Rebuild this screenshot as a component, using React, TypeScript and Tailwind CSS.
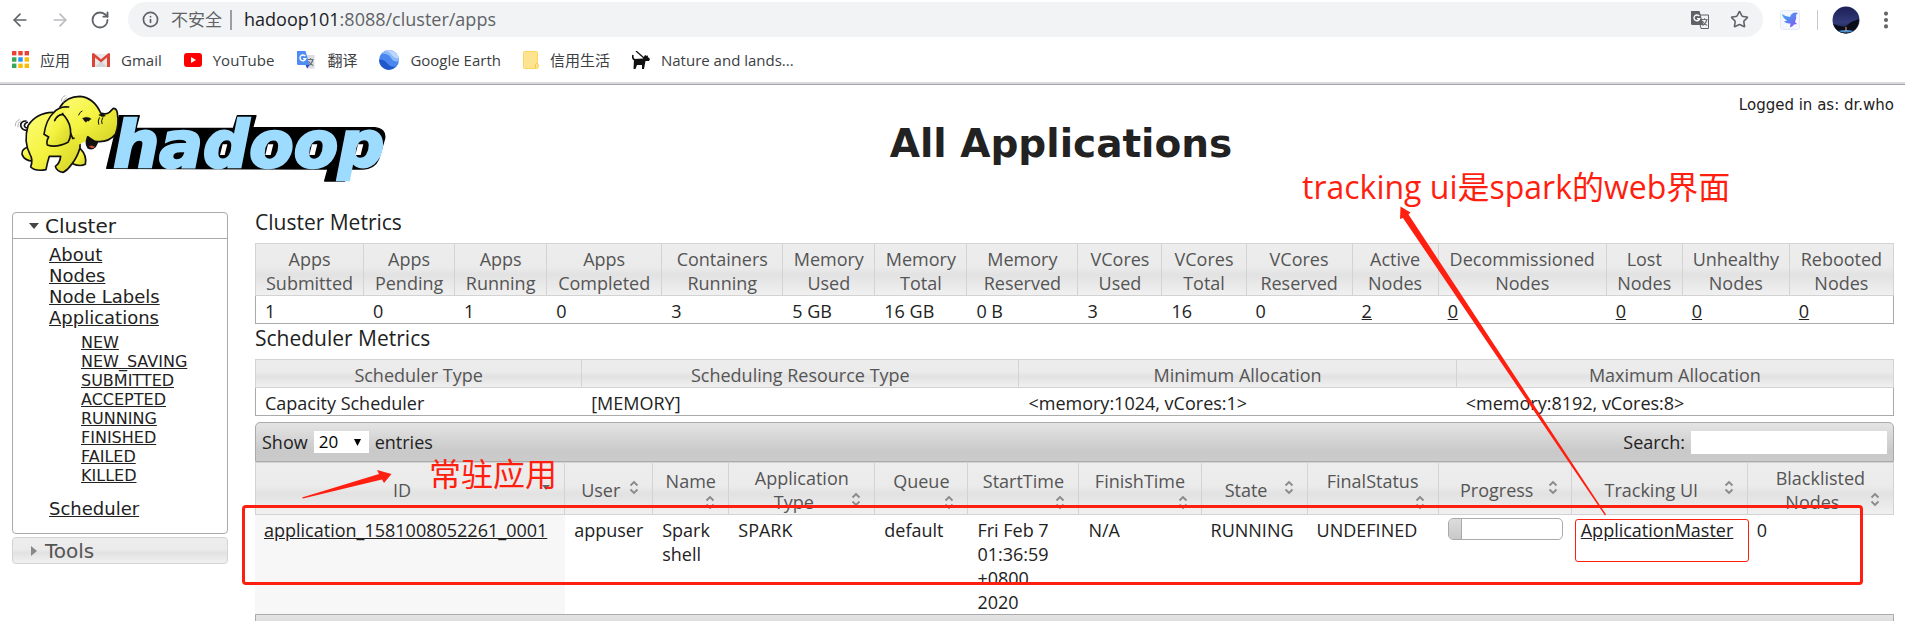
import type { ReactNode } from "react";
import { ArrowLeft, ArrowRight, RotateCw, Info, Star, EllipsisVertical } from "lucide-react";

const ui = "font-['Open_Sans','Noto_Sans_CJK_SC',sans-serif]";
const headBg = "bg-[linear-gradient(#ededed,#ebebeb_45%,#e2e2e2_60%,#f1f1f1)]";

function HadoopLogo() {
  return (
    <svg viewBox="0 0 1200 330" className="h-[110px] w-[400px] shrink-0" role="img" aria-label="hadoop">
      <defs>
        <linearGradient id="skin" x1="0" y1="0" x2="1" y2="1">
          <stop offset="0" stopColor="#fdfc7a" />
          <stop offset="0.5" stopColor="#f4f33f" />
          <stop offset="1" stopColor="#d2d024" />
        </linearGradient>
      </defs>
      <path
        d="M358 92 L418 92 L408 130 L700 130 L712 92 L768 92 L758 128 L1124 128 Q1158 132 1154 160 L1136 222 Q1124 250 1090 252 L1044 252 L1034 288 L974 288 L984 252 L320 250 Z"
        fill="#000"
        stroke="#000"
        strokeWidth="4"
        strokeLinejoin="round"
      />
      <text
        x="340"
        y="245"
        fill="#9edcff"
        stroke="#9edcff"
        strokeWidth="8"
        fontFamily="'DejaVu Sans', sans-serif"
        fontWeight="700"
        fontStyle="italic"
        fontSize="194"
      >
        hadoop
      </text>
      <g fill="#fff">
        <path d="M668 178 L682 178 L674 210 L660 210 Z" />
        <path d="M804 178 L820 178 L812 210 L796 210 Z" />
        <path d="M936 178 L952 178 L944 210 L928 210 Z" />
        <path d="M1074 178 L1090 178 L1082 210 L1066 210 Z" />
      </g>
      <g fill="url(#skin)" stroke="#111" strokeWidth="5" strokeLinejoin="round" strokeLinecap="round">
        <path d="M84 136 Q66 138 62 122 Q62 108 78 108 M84 128 Q74 130 73 121 Q74 115 82 112" fill="none" />
        <path d="M88 186 Q64 190 66 208 Q74 228 98 228 L112 200 Z" />
        <path d="M240 190 Q262 212 256 238 Q240 246 218 236 L222 206 Z" />
        <path d="M158 82 Q108 84 84 122 Q70 170 90 208 Q100 224 92 246 Q106 260 138 254 Q142 232 148 214 Q166 214 182 214 Q180 234 166 244 Q170 260 190 262 Q204 254 216 236 Q232 216 240 188 L240 120 Z" />
        <path d="M180 66 Q200 34 240 34 Q282 38 302 84 Q318 90 328 82 L340 70 Q350 70 352 84 Q358 120 346 148 Q322 176 282 168 L264 156 L218 160 Z" />
        <path d="M222 150 L262 146 L258 168 L228 184 Z" stroke="none" fill="#e9e733" />
        <path d="M264 156 Q254 172 264 188 Q282 198 292 172 Q276 170 264 156 Z" fill="#111" />
        <path d="M266 184 Q276 178 286 186 Q276 194 266 184 Z" fill="#e5533c" strokeWidth="1" />
        <path d="M206 66 Q178 62 160 84 Q138 104 132 148 L146 156 Q138 170 142 180 Q168 190 204 172 Q218 150 208 118 Q196 90 186 88 Q172 90 164 106" />
        <path d="M186 88 Q170 92 164 108 M236 90 Q240 80 246 78 M296 118 Q292 108 298 98 M306 116 Q302 108 308 98" fill="none" strokeWidth="3" />
        <path d="M248 100 Q262 92 274 102 Q262 104 258 112 Q252 108 248 100 Z M262 106 Q264 112 270 104 Z" fill="#111" strokeWidth="1" />
        <path d="M298 90 Q306 82 316 92 Q306 98 298 90 Z" fill="#111" strokeWidth="2" />
        <path d="M184 48 Q184 36 196 32 M190 52 Q190 42 200 38 M46 122 Q46 108 58 104 M54 126 Q52 114 62 108" fill="none" stroke="#888" strokeWidth="2" />
      </g>
    </svg>
  );
}

function TranslateIcon({ color }: { color?: boolean }) {
  const back = color ? "#4f8df5" : "#5f6368";
  return (
    <svg viewBox="0 0 20 20" className="size-5 shrink-0" aria-hidden="true">
      <path d="M8 5h10.500v13.500H11z" fill={color ? "#d9dce0" : "#f1f3f4"} stroke={color ? "none" : "#5f6368"} />
      <path d="M11.500 9.500h6M14.500 8.200v1.300M17 9.500c-.8 3-2.600 5-4.600 6M12.400 11c1 2 2.600 3.600 4.800 4.400" stroke="#6b7075" fill="none" strokeWidth="1.100" />
      <path d="M1 1h8.500l4 14H2.200Q1 15 1 13.800z" fill={back} />
      {color && <path d="M9.500 15h4l-2.300 3.500z" fill="#1f4fb5" />}
      <path d="M9.300 6.200A2.900 2.900 0 1 0 9.700 8.600H7" stroke="#fff" fill="none" strokeWidth="1.400" />
    </svg>
  );
}

function AppsIcon() {
  const colors = ["#ea4335", "#ea4335", "#ea4335", "#34a853", "#2196f3", "#fbbc05", "#34a853", "#fbbc05", "#fbbc05"];
  return (
    <svg viewBox="0 0 17 17" className="h-[17px] w-[17px]" aria-hidden="true">
      {colors.map((c, i) => (
        <rect key={i} x={(i % 3) * 6.300} y={Math.floor(i / 3) * 6.300} width="4.400" height="4.400" fill={c} />
      ))}
    </svg>
  );
}

function GmailIcon() {
  return (
    <svg viewBox="0 0 18 14" className="h-[14px] w-[18px]" aria-hidden="true">
      <path d="M0 1h18v13H0z" fill="#e8e8e8" />
      <path d="M3 14l6-6 6 6z" fill="#d5d5d5" />
      <path d="M0 14V1.200Q0 0 1.500 0L9 6.200 16.500 0Q18 0 18 1.200V14h-3V4.500L9 9.600 3 4.500V14z" fill="#db4437" />
    </svg>
  );
}

function YouTubeIcon() {
  return (
    <svg viewBox="0 0 18 14" className="h-[14px] w-[18px]" aria-hidden="true">
      <rect width="18" height="14" rx="3" fill="#f00" />
      <path d="M7 4l5 3-5 3z" fill="#fff" />
    </svg>
  );
}

function EarthIcon() {
  return (
    <svg viewBox="0 0 20 20" className="size-5" aria-hidden="true">
      <circle cx="10" cy="10" r="10" fill="#4a86f0" />
      <path d="M2 4Q8-2 15 1.500 20 5 20 11 15 13 12 8 9 3 2 4z" fill="#8ab8fb" />
      <path d="M5 1.500Q9 0 12 4 15 9 20 8 18 1 10 0 7 0 5 1.500z" fill="#bcd7fd" />
      <path d="M0 10Q4 8 8 13 12 18 17 16.500 13 20.500 8 19.700 1 18 0 10z" fill="#2158c9" />
    </svg>
  );
}

function NoteIcon() {
  return (
    <svg viewBox="0 0 16 18" className="h-[18px] w-4" aria-hidden="true">
      <path d="M1.500.5h12q1 0 1 1v11q1 .5 1 2.500 0 2.500-2 2.500H1.500q-1 0-1-1v-15q0-1 1-1z" fill="#fee391" stroke="#fbd65a" />
      <path d="M12.500 17V13.500q0-1 1.800-1" fill="none" stroke="#f5c93e" />
    </svg>
  );
}

function DogIcon() {
  return (
    <svg viewBox="0 0 18 18" className="size-[18px]" aria-hidden="true">
      <path d="M4 0l8 7" stroke="#111" strokeWidth="1.300" />
      <path d="M1 4q-1 4 2 5" stroke="#111" strokeWidth="1.600" fill="none" />
      <path d="M2 8l9-.5L13 4l2 1 .5-1 .5 2 2 2-1 2h-3.500L12 18h-2v-4H5l-1.500 4h-2z" fill="#111" />
    </svg>
  );
}

function Bookmark({ icon, label }: { icon: ReactNode; label: string }) {
  return (
    <a href="#" className="flex items-center gap-[11px] text-[15px] leading-5 text-[#3c4043]">
      {icon}
      {label}
    </a>
  );
}

function BrowserChrome() {
  return (
    <header className={`${ui} shrink-0 border-b border-[#a5a5a5] bg-white`}>
      <div className="flex items-center pt-[2px] pr-2 pl-[10px]">
        <div className="flex w-[118px] items-center gap-5 text-[#5f6368]">
          <button aria-label="Back"><ArrowLeft size={20} strokeWidth={2} /></button>
          <button aria-label="Forward"><ArrowRight size={20} strokeWidth={2} className="text-[#b9bbbe]" /></button>
          <button aria-label="Reload"><RotateCw size={20} strokeWidth={2.2} /></button>
        </div>
        <div className="flex h-[35px] flex-1 items-center rounded-full bg-[#f1f3f4] pr-[14px] pl-[14px] text-[17px] text-[#5f6368]">
          <Info size={17} strokeWidth={2.4} />
          <span className="ml-3">不安全</span>
          <span className="mx-2 h-5 w-[2px] bg-[#9a9da1]" />
          <span className="ml-1 flex-1 text-[18px]">
            <span className="text-[#202124]">hadoop101</span>:8088/cluster/apps
          </span>
          <span className="flex items-center gap-5">
            <button aria-label="Translate"><TranslateIcon /></button>
            <button aria-label="Bookmark"><Star size={19} strokeWidth={2} /></button>
          </span>
        </div>
        <div className="ml-[17px] flex items-center">
          <svg viewBox="0 0 20 20" className="size-5" aria-hidden="true">
            <defs>
              <linearGradient id="bird" x1="0" y1="0" x2="1" y2="1">
                <stop offset="0" stopColor="#36b4f5" />
                <stop offset="1" stopColor="#8a4cf0" />
              </linearGradient>
            </defs>
            <rect x=".5" y=".5" width="19" height="19" rx="2" fill="#f5f7ff" stroke="#e6eaf6" />
            <path d="M2 4q4 3 8 3 1-4 5-4.500L18 3l-2 2q1 3-1 7l2 2-3 .5q-1 2-4 3l.5-4Q6 14 4 11q2 0 3-.5Q3 8 2 4z" fill="url(#bird)" />
          </svg>
          <span className="ml-[17px] h-5 w-px bg-[#c6c8cb]" />
          <svg viewBox="0 0 28 28" className="ml-[14px] size-[28px]" aria-hidden="true">
            <defs>
              <linearGradient id="sky" x1="0" y1="0" x2="0" y2="1">
                <stop offset="0" stopColor="#1b1f55" />
                <stop offset="0.600" stopColor="#343b7a" />
                <stop offset="1" stopColor="#0b1020" />
              </linearGradient>
            </defs>
            <circle cx="14" cy="14" r="13.500" fill="url(#sky)" />
            <path d="M1 18q5 2 12 3l6-5 8-3q0 12-13 14.500Q4 27 1 18z" fill="#0a0d18" />
            <path d="M6 25q8-2 16 0-8 3-16 0z" fill="#4a8fd0" />
            <path d="M14 21v4" stroke="#f3a27a" />
          </svg>
          <button aria-label="Menu" className="ml-[15px] text-[#5f6368]"><EllipsisVertical size={22} strokeWidth={2.5} /></button>
        </div>
      </div>
      <nav className="flex h-[47px] items-center gap-[22px] border-b-2 border-[#dadbe0] pl-3">
        <Bookmark icon={<AppsIcon />} label="应用" />
        <Bookmark icon={<GmailIcon />} label="Gmail" />
        <Bookmark icon={<YouTubeIcon />} label="YouTube" />
        <Bookmark icon={<TranslateIcon color />} label="翻译" />
        <Bookmark icon={<EarthIcon />} label="Google Earth" />
        <Bookmark icon={<NoteIcon />} label="信用生活" />
        <Bookmark icon={<DogIcon />} label="Nature and lands..." />
      </nav>
    </header>
  );
}

const states = ["NEW", "NEW_SAVING", "SUBMITTED", "ACCEPTED", "RUNNING", "FINISHED", "FAILED", "KILLED"];

function Sidebar() {
  return (
    <aside className="mt-1 ml-3 w-[216px] shrink-0">
      <section className="rounded-[4px] border border-[#aaa]">
        <h3 className="flex h-[26px] items-center border-b border-[#aaa] pl-4 text-[20px] leading-[26px]">
          <svg viewBox="0 0 10 6" className="mr-[6px] h-[6px] w-[10px]" aria-hidden="true"><path d="M0 0h10L5 6z" fill="#454545" /></svg>
          Cluster
        </h3>
        <ul className="pt-[5px] pb-[14px] pl-9 text-[18px] leading-[21px]">
          {["About", "Nodes", "Node Labels", "Applications"].map((t) => (
            <li key={t}><a href="#" className="underline">{t}</a></li>
          ))}
          <li>
            <ul className="pt-[5px] pb-[13px] pl-8 text-[16px] leading-[19px]">
              {states.map((t) => (
                <li key={t}><a href="#" className="underline">{t}</a></li>
              ))}
            </ul>
          </li>
          <li><a href="#" className="underline">Scheduler</a></li>
        </ul>
      </section>
      <h3 className={`${headBg} mt-[3px] flex h-[27px] items-center rounded-[4px] border border-[#d3d3d3] pl-[18px] text-[20px] text-[#555]`}>
        <svg viewBox="0 0 6 10" className="mr-2 h-[10px] w-[6px]" aria-hidden="true"><path d="M0 0v10l6-5z" fill="#888" /></svg>
        Tools
      </h3>
    </aside>
  );
}

const clusterCols: [string, string, string, string][] = [
  ["Apps", "Submitted", "1", "w-[109px]"],
  ["Apps", "Pending", "0", "w-[91px]"],
  ["Apps", "Running", "1", "w-[92px]"],
  ["Apps", "Completed", "0", "w-[115px]"],
  ["Containers", "Running", "3", "w-[121px]"],
  ["Memory", "Used", "5 GB", "w-[92px]"],
  ["Memory", "Total", "16 GB", "w-[92px]"],
  ["Memory", "Reserved", "0 B", "w-[111px]"],
  ["VCores", "Used", "3", "w-[84px]"],
  ["VCores", "Total", "16", "w-[84px]"],
  ["VCores", "Reserved", "0", "w-[106px]"],
  ["Active", "Nodes", "2", "w-[86px]"],
  ["Decommissioned", "Nodes", "0", "w-[168px]"],
  ["Lost", "Nodes", "0", "w-[76px]"],
  ["Unhealthy", "Nodes", "0", "w-[107px]"],
  ["Rebooted", "Nodes", "0", "w-[104px]"],
];

const schedCols: [string, string, string][] = [
  ["Scheduler Type", "Capacity Scheduler", "w-[327px]"],
  ["Scheduling Resource Type", "[MEMORY]", "w-[437px]"],
  ["Minimum Allocation", "<memory:1024, vCores:1>", "w-[437px]"],
  ["Maximum Allocation", "<memory:8192, vCores:8>", "w-[437px]"],
];

const th = "border-y border-r first:border-l border-[#d3d3d3] pt-[3px] font-normal text-[#555]";
const td = "px-[9px] pt-[3px] text-left align-top";
const metricTd = `${td} border-b border-[#aaa] first:border-l last:border-r`;
const tableCls = "w-full table-fixed border-separate border-spacing-0 text-[18px] leading-6";

function SortIcon({ kind, below }: { kind: "both" | "down"; below?: boolean }) {
  return (
    <svg viewBox="0 0 16 18" aria-hidden="true" className={below ? "ml-auto block h-[18px] w-4" : "float-right h-[18px] w-4"}>
      {kind === "both" ? (
        <path d="M4.500 7.500L8 4l3.500 3.500M4.500 11.500L8 15l3.500-3.500" fill="none" stroke="#8a8a8a" strokeWidth="1.800" />
      ) : (
        <path d="M4 7h8l-4 5z" fill="#666" />
      )}
    </svg>
  );
}

const appCols: [string, string, boolean][] = [
  ["ID", "w-[310px]", false],
  ["User", "w-[88px]", false],
  ["Name", "w-[76px]", true],
  ["Application Type", "w-[146px]", false],
  ["Queue", "w-[93px]", true],
  ["StartTime", "w-[111px]", true],
  ["FinishTime", "w-[122px]", true],
  ["State", "w-[106px]", false],
  ["FinalStatus", "w-[131px]", true],
  ["Progress", "w-[133px]", false],
  ["Tracking UI", "w-[176px]", false],
  ["Blacklisted Nodes", "w-[146px]", false],
];

function SectionTitle({ children }: { children: ReactNode }) {
  return <h2 className="mb-[7px] text-[21px] leading-7">{children}</h2>;
}

function Content() {
  return (
    <main className={`${ui} mr-[11px] ml-[27px] min-w-0 flex-1`}>
      <SectionTitle>Cluster Metrics</SectionTitle>
      <table className={tableCls}>
        <colgroup>{clusterCols.map((c, i) => <col key={i} className={c[3]} />)}</colgroup>
        <thead>
          <tr className={headBg}>
            {clusterCols.map((c, i) => <th key={i} className={th}>{c[0]}<br />{c[1]}</th>)}
          </tr>
        </thead>
        <tbody>
          <tr>
            {clusterCols.map((c, i) => (
              <td key={i} className={metricTd}>{i > 10 ? <a href="#" className="underline">{c[2]}</a> : c[2]}</td>
            ))}
          </tr>
        </tbody>
      </table>
      <SectionTitle>Scheduler Metrics</SectionTitle>
      <table className={tableCls}>
        <colgroup>{schedCols.map((c) => <col key={c[0]} className={c[2]} />)}</colgroup>
        <thead>
          <tr className={headBg}>{schedCols.map((c) => <th key={c[0]} className={th}>{c[0]}</th>)}</tr>
        </thead>
        <tbody>
          <tr>{schedCols.map((c) => <td key={c[0]} className={metricTd}>{c[1]}</td>)}</tr>
        </tbody>
      </table>
      <div className="mt-[6px] flex h-10 items-center justify-between rounded-t-[5px] border border-[#aaa] bg-[linear-gradient(#e4e4e4,#c9c9c9_75%,#cbcbcb)] px-[6px] text-[18px]">
        <label className="flex items-center gap-[6px]">
          Show
          <span className="relative flex">
            <select defaultValue="20" className="h-[22px] w-[55px] appearance-none bg-white pl-[5px] text-[17px] leading-[22px] text-black">
              <option>20</option>
              <option>50</option>
            </select>
            <svg viewBox="0 0 8 8" className="pointer-events-none absolute top-[8px] right-[8px] size-[7px]" aria-hidden="true"><path d="M0 0h8L4 8z" fill="#000" /></svg>
          </span>
          entries
        </label>
        <label className="flex items-center gap-[6px]">
          Search:
          <input type="text" className="h-[23px] w-[196px] bg-white px-1" />
        </label>
      </div>
      <table className={tableCls}>
        <colgroup>{appCols.map((c) => <col key={c[0]} className={c[1]} />)}</colgroup>
        <thead>
          <tr className={headBg}>
            {appCols.map(([name, , below], i) => (
              <th key={name} className={`${th} px-[10px]`}>
                {below ? (
                  <div>
                    <div className="-mx-2">{name}</div>
                    <SortIcon kind="both" below />
                  </div>
                ) : (
                  <div>
                    {name}
                    <SortIcon kind={i === 0 ? "down" : "both"} />
                  </div>
                )}
              </th>
            ))}
          </tr>
        </thead>
        <tbody>
          <tr>
            <td className={`${td} bg-[#f7f7f7]`}><a href="#" className="underline">application_1581008052261_0001</a></td>
            <td className={td}>appuser</td>
            <td className={td}>Spark shell</td>
            <td className={td}>SPARK</td>
            <td className={td}>default</td>
            <td className={td}>Fri Feb 7<br />01:36:59<br />+0800<br />2020</td>
            <td className={td}>N/A</td>
            <td className={td}>RUNNING</td>
            <td className={td}>UNDEFINED</td>
            <td className={td}>
              <div role="progressbar" aria-label="Progress" className="h-[22px] w-full max-w-[115px] overflow-hidden rounded-[5px] border border-[#aaa] bg-white">
                <div className="h-full w-[12%] border-r border-[#aaa] bg-[linear-gradient(#dcdcdc,#c9c9c9)]" />
              </div>
            </td>
            <td className={td}><a href="#" className="underline">ApplicationMaster</a></td>
            <td className={td}>0</td>
          </tr>
        </tbody>
      </table>
      <div className="h-10 rounded-b-[5px] border border-[#aaa] bg-[linear-gradient(#e4e4e4,#c9c9c9_75%,#cbcbcb)]" />
    </main>
  );
}

function Annotations() {
  return (
    <div className={`${ui} pointer-events-none absolute inset-0 text-[#ff1f10]`}>
      <div className="absolute top-[505px] left-[242px] h-[80px] w-[1621px] rounded-[4px] border-3 border-[#ff1f10]" />
      <div className="absolute top-[519px] left-[1575px] h-[43px] w-[174px] rounded-[3px] border border-[#ff1f10]" />
      <p className="absolute top-[165px] left-[1302px] text-[32px] leading-[44px] whitespace-nowrap">tracking ui是spark的web界面</p>
      <p className="absolute top-[452px] left-[429px] text-[32px] leading-[44px] whitespace-nowrap">常驻应用</p>
      <svg viewBox="0 0 90 30" className="absolute top-[469px] left-[302px] h-[30px] w-[90px]" aria-hidden="true">
        <path d="M0 28.500L77 5 75 1 89.500 5 82 14 80 10.500 1 29.500z" fill="#ff1f10" />
      </svg>
      <svg viewBox="0 0 208 312" className="absolute top-[205px] left-[1399px] h-[312px] w-[208px]" aria-hidden="true">
        <path d="M1.500 1.500L11.500 7.500 9.500 9.500 207 309.500 206 310.500 4 13 1 14z" fill="#ff1f10" />
      </svg>
    </div>
  );
}

export default function App() {
  return (
    <div className="relative flex h-screen flex-col overflow-hidden bg-white font-['DejaVu_Sans',sans-serif] text-[#222]">
      <BrowserChrome />
      <div className="flex h-[123px] shrink-0">
        <div className="w-[228px] shrink-0">
          <HadoopLogo />
        </div>
        <div className="mr-[11px] flex-1">
          <p className="pt-2 text-right text-[15px] leading-6">Logged in as: dr.who</p>
          <h1 className="pt-1 text-center text-[39px] leading-[46px] font-bold">All Applications</h1>
        </div>
      </div>
      <div className="flex">
        <Sidebar />
        <Content />
      </div>
      <Annotations />
    </div>
  );
}
